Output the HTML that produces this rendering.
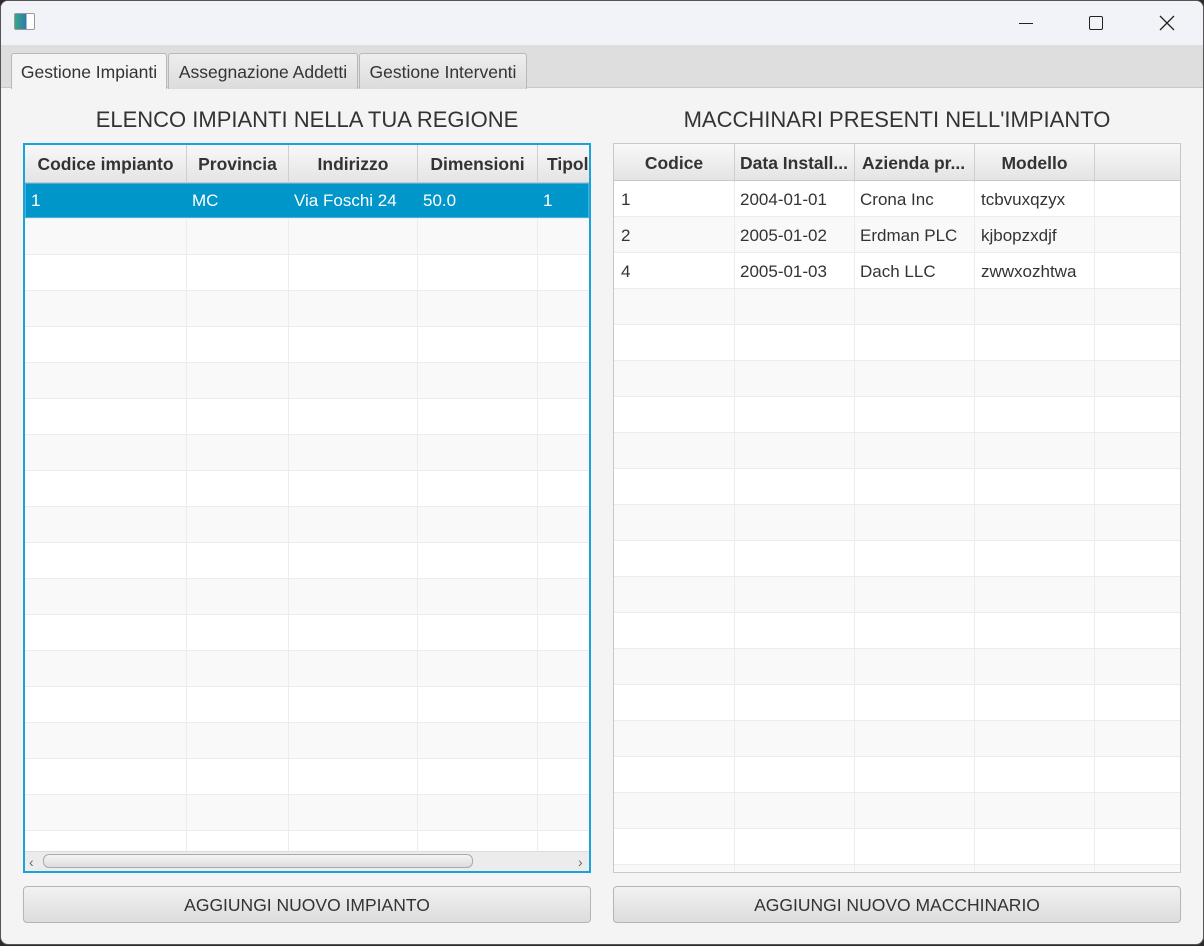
<!DOCTYPE html>
<html><head><meta charset="utf-8"><style>
*{box-sizing:border-box;margin:0;padding:0}
body{width:1204px;height:946px;background:#2b2b2b;font-family:"Liberation Sans",sans-serif;position:relative;overflow:hidden}
.win{position:absolute;left:0;top:0;width:1204px;height:945px;background:#f4f4f4;border-radius:8px;overflow:hidden;border:1px solid #555}
.title{position:absolute;left:0;top:0;width:100%;height:44px;background:#f2f3f8}
.tabbar{position:absolute;left:0;top:44px;width:100%;height:43px;background:#dedede;border-bottom:1px solid #c8c8c8}
.tab{position:absolute;top:8px;height:36px;border:1px solid #b8b8b8;border-bottom:none;border-radius:3px 3px 0 0;background:linear-gradient(#eee,#dcdcdc);font-size:17.5px;color:#333;padding-top:8px;text-align:center;white-space:nowrap}
.tab.sel{background:#f4f4f4;height:36px}
.h{position:absolute;top:106px;font-size:22px;color:#333;text-align:center;width:568px;white-space:nowrap}
.tbl{position:absolute;top:142px;width:568px;height:730px;background:#fff;overflow:hidden}
.body{position:absolute;left:0;top:38px;right:0;bottom:0;background:repeating-linear-gradient(#fff 0,#fff 35px,#ececec 35px,#ececec 36px,#f9f9f9 36px,#f9f9f9 71px,#ececec 71px,#ececec 72px)}
.hd{position:absolute;left:0;top:0;right:0;height:38px;background:linear-gradient(#f8f8f8,#e4e4e4);border-bottom:1px solid #c8c8c8}
.hc{position:absolute;top:0;height:38px;border-right:1px solid #cfcfcf;font-weight:bold;font-size:17.5px;color:#333;text-align:center;padding-top:9px;white-space:nowrap;overflow:hidden}
.vl{position:absolute;top:38px;bottom:0;width:1px;background:#ececec}
.c{position:absolute;font-size:17px;color:#333;white-space:nowrap}
.btn{position:absolute;top:885px;height:37px;width:568px;border:1px solid #b5b5b5;border-radius:4px;background:linear-gradient(#f2f2f2,#dcdcdc);font-size:17.5px;color:#333;text-align:center;padding-top:8px}
</style></head><body>
<div class="win">
<div class="title">
<div style="position:absolute;left:13px;top:12px;width:21px;height:17px;border:1px solid #999;background:linear-gradient(90deg,#3a8 0,#37a 60%,#fff 60%);border-radius:2px"></div>
<div style="position:absolute;left:1018px;top:22px;width:14px;height:1px;background:#222"></div>
<div style="position:absolute;left:1088px;top:15px;width:14px;height:14px;border:1.5px solid #222;border-radius:2px"></div>
<svg style="position:absolute;left:1158px;top:14px" width="16" height="16"><path d="M1 1L15 15M15 1L1 15" stroke="#222" stroke-width="1.3"/></svg>
</div>
<div class="tabbar">
<div class="tab sel" style="left:10px;width:156px">Gestione Impianti</div>
<div class="tab" style="left:167px;width:190px">Assegnazione Addetti</div>
<div class="tab" style="left:358px;width:168px">Gestione Interventi</div>
</div>
<div class="h" style="left:22px">ELENCO IMPIANTI NELLA TUA REGIONE</div>
<div class="h" style="left:612px">MACCHINARI PRESENTI NELL'IMPIANTO</div>

<div class="tbl" style="left:22px;border:2px solid #1aa3d9">
<div class="body"></div>
<div class="vl" style="left:161px"></div><div class="vl" style="left:263px"></div><div class="vl" style="left:392px"></div><div class="vl" style="left:512px"></div>
<div class="hd">
<div class="hc" style="left:0;width:162px">Codice impianto</div>
<div class="hc" style="left:162px;width:102px">Provincia</div>
<div class="hc" style="left:264px;width:129px">Indirizzo</div>
<div class="hc" style="left:393px;width:120px">Dimensioni</div>
<div class="hc" style="left:513px;width:60px;text-align:left;padding-left:9px;border:none">Tipol</div>
</div>
<div style="position:absolute;left:0;top:38px;width:564px;height:35px;background:#0096c9;border:1px solid #45b0dd"></div>
<div class="c" style="left:6px;top:46px;color:#fff">1</div>
<div class="c" style="left:167px;top:46px;color:#fff">MC</div>
<div class="c" style="left:269px;top:46px;color:#fff">Via Foschi 24</div>
<div class="c" style="left:398px;top:46px;color:#fff">50.0</div>
<div class="c" style="left:518px;top:46px;color:#fff">1</div>
<div style="position:absolute;left:0;bottom:0;width:564px;height:20px;background:#ececec;border-top:1px solid #ddd"></div>
<div style="position:absolute;left:18px;bottom:3px;width:430px;height:14px;border:1px solid #aaa;border-radius:6px;background:linear-gradient(#f4f4f4,#ddd)"></div>
<div class="c" style="left:4px;bottom:1px;font-size:14px;color:#666">‹</div>
<div class="c" style="left:553px;bottom:1px;font-size:14px;color:#666">›</div>
</div>

<div class="tbl" style="left:612px;border:1px solid #c8c8c8">
<div class="body" style="top:37px"></div>
<div class="vl" style="left:120px"></div><div class="vl" style="left:240px"></div><div class="vl" style="left:360px"></div><div class="vl" style="left:480px"></div>
<div class="hd" style="height:37px">
<div class="hc" style="left:0;width:121px">Codice</div>
<div class="hc" style="left:121px;width:120px;text-align:left;padding-left:5px">Data Install...</div>
<div class="hc" style="left:241px;width:120px;text-align:left;padding-left:7px">Azienda pr...</div>
<div class="hc" style="left:361px;width:120px">Modello</div>
<div class="hc" style="left:481px;width:90px;border:none"></div>
</div>
<div class="c" style="left:7px;top:46px">1</div><div class="c" style="left:126px;top:46px">2004-01-01</div><div class="c" style="left:246px;top:46px">Crona Inc</div><div class="c" style="left:367px;top:46px">tcbvuxqzyx</div>
<div class="c" style="left:7px;top:82px">2</div><div class="c" style="left:126px;top:82px">2005-01-02</div><div class="c" style="left:246px;top:82px">Erdman PLC</div><div class="c" style="left:367px;top:82px">kjbopzxdjf</div>
<div class="c" style="left:7px;top:118px">4</div><div class="c" style="left:126px;top:118px">2005-01-03</div><div class="c" style="left:246px;top:118px">Dach LLC</div><div class="c" style="left:367px;top:118px">zwwxozhtwa</div>
</div>

<div class="btn" style="left:22px">AGGIUNGI NUOVO IMPIANTO</div>
<div class="btn" style="left:612px">AGGIUNGI NUOVO MACCHINARIO</div>
</div>
</body></html>
